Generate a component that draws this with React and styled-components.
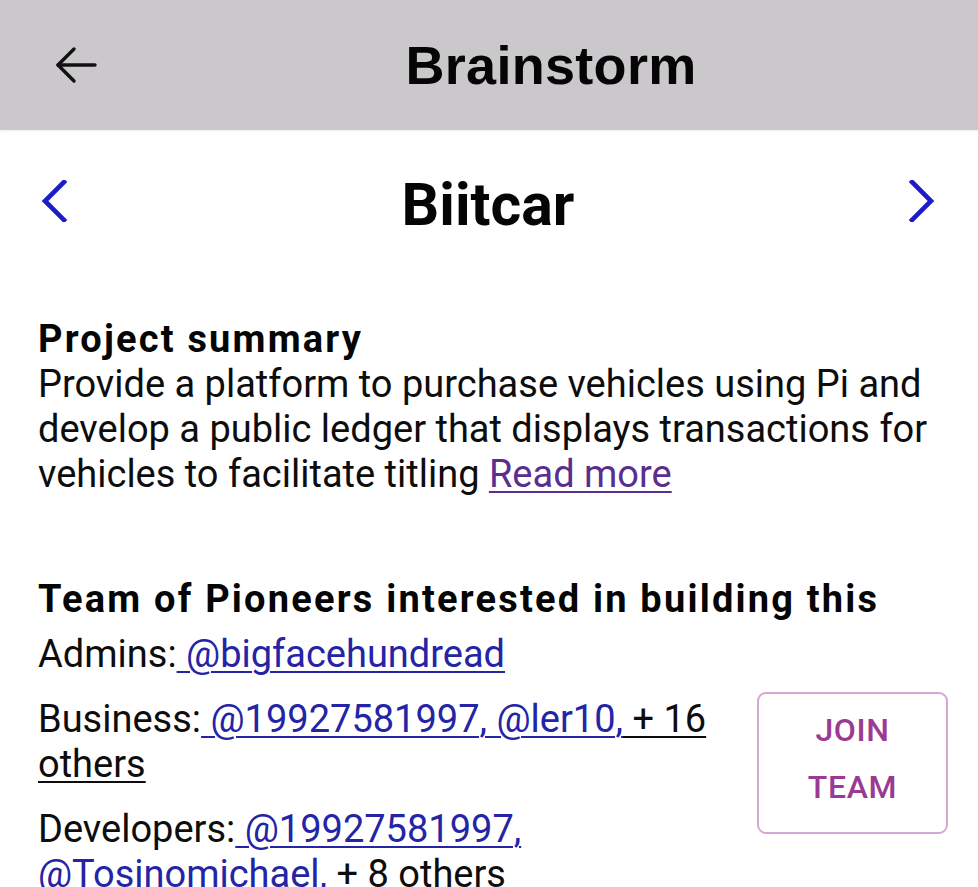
import styled, { createGlobalStyle } from 'styled-components';

const GlobalStyle = createGlobalStyle`
  html, body {
    margin: 0;
    padding: 0;
    background: #ffffff;
    font-family: Roboto, "Noto Sans", sans-serif;
    color: #111111;
  }
`;

const Page = styled.div`
  width: 978px;
  height: 887px;
  overflow: hidden;
  background: #ffffff;
`;

const Header = styled.header`
  height: 130px;
  background: #cac8cb;
  display: flex;
  align-items: center;
  padding-left: 55px;
  gap: 27px;
  box-shadow: 0 1px 2px rgba(0, 0, 0, 0.08);
`;

const HeaderTitle = styled.h1`
  flex: 1;
  margin: 0;
  text-align: center;
  font-family: "Liberation Sans", Arial, sans-serif;
  font-size: 54px;
  font-weight: 700;
  line-height: 60px;
  letter-spacing: 0.3px;
  color: #050505;
`;

const NavRow = styled.div`
  display: flex;
  align-items: flex-start;
  padding: 43px 42px 0 40px;
`;

const NavTitle = styled.h2`
  flex: 1;
  margin: 0;
  text-align: center;
  font-size: 59px;
  font-weight: 700;
  line-height: 64px;
  color: #050505;
`;

const Chevron = styled.button`
  border: none;
  background: transparent;
  padding: 0;
  margin-top: 7px;
  width: 30px;
  height: 42px;
  display: flex;
  color: #1c1cc8;
`;

const Section = styled.section`
  padding: 0 30px 0 38px;
  margin-top: ${(p) => p.$top}px;
`;

const Heading = styled.h3`
  margin: 0;
  font-size: 38px;
  font-weight: 700;
  line-height: 45px;
  letter-spacing: 2.2px;
  color: #050505;
`;

const Text = styled.p`
  margin: 0;
  font-size: 38px;
  line-height: 45px;
  color: #0d0d0d;
`;

const Row = styled(Text)`
  margin-top: ${(p) => p.$top || 20}px;
`;

const Link = styled.a`
  color: ${(p) => (p.$plain ? '#0d0d0d' : p.$visited ? '#5b2d8e' : '#2424a6')};
  text-decoration: underline;
  text-decoration-thickness: 2px;
  text-underline-offset: 4px;
  cursor: pointer;
`;

const TeamBody = styled.div`
  display: flex;
  gap: 17px;
  align-items: flex-start;
`;

const Roles = styled.div`
  flex: 1;
`;

const JoinButton = styled.button`
  width: 191px;
  height: 142px;
  margin-top: 15px;
  flex-shrink: 0;
  border: 2px solid #d3a9d3;
  border-radius: 9px;
  background: #ffffff;
  color: #9a3a92;
  font-family: Roboto, "Noto Sans", sans-serif;
  font-size: 32px;
  font-weight: 500;
  line-height: 57px;
  letter-spacing: 0.02em;
  padding: 0 0 8px;
`;

function BackArrow() {
  return (
    <svg width="42" height="38" viewBox="0 0 42 38" fill="none" stroke="#111" strokeWidth="3.4" strokeLinecap="round" strokeLinejoin="round">
      <path d="M40 19H3" />
      <path d="M19 3L3 19l16 16" />
    </svg>
  );
}

function ChevronIcon({ dir }) {
  const d = dir === 'left' ? 'M24 2L5 21l19 19' : 'M6 2l19 19L6 40';
  return (
    <svg width="30" height="42" viewBox="0 0 30 42" fill="none" stroke="currentColor" strokeWidth="4.6" strokeLinecap="square">
      <path d={d} />
    </svg>
  );
}

export default function App() {
  return (
    <Page>
      <GlobalStyle />
      <Header>
        <BackArrow />
        <HeaderTitle>Brainstorm</HeaderTitle>
      </Header>

      <NavRow>
        <Chevron type="button" aria-label="previous">
          <ChevronIcon dir="left" />
        </Chevron>
        <NavTitle>Biitcar</NavTitle>
        <Chevron type="button" aria-label="next">
          <ChevronIcon dir="right" />
        </Chevron>
      </NavRow>

      <Section $top={80}>
        <Heading>Project summary</Heading>
        <Text>
          Provide a platform to purchase vehicles using Pi and develop a public ledger that
          displays transactions for vehicles to facilitate titling <Link $visited>Read more</Link>
        </Text>
      </Section>

      <Section $top={80}>
        <Heading>Team of Pioneers interested in building this</Heading>
        <Row $top={10}>
          Admins:<Link> @bigfacehundread</Link>
        </Row>
        <TeamBody>
          <Roles>
            <Row>
              Business:<Link> @19927581997,</Link>
              <Link> @ler10,</Link>
              <Link $plain> + 16 others</Link>
            </Row>
            <Row>
              Developers:<Link> @19927581997,</Link>
              <Link> @Tosinomichael,</Link> + 8 others
            </Row>
          </Roles>
          <JoinButton type="button">
            JOIN
            <br />
            TEAM
          </JoinButton>
        </TeamBody>
      </Section>
    </Page>
  );
}
